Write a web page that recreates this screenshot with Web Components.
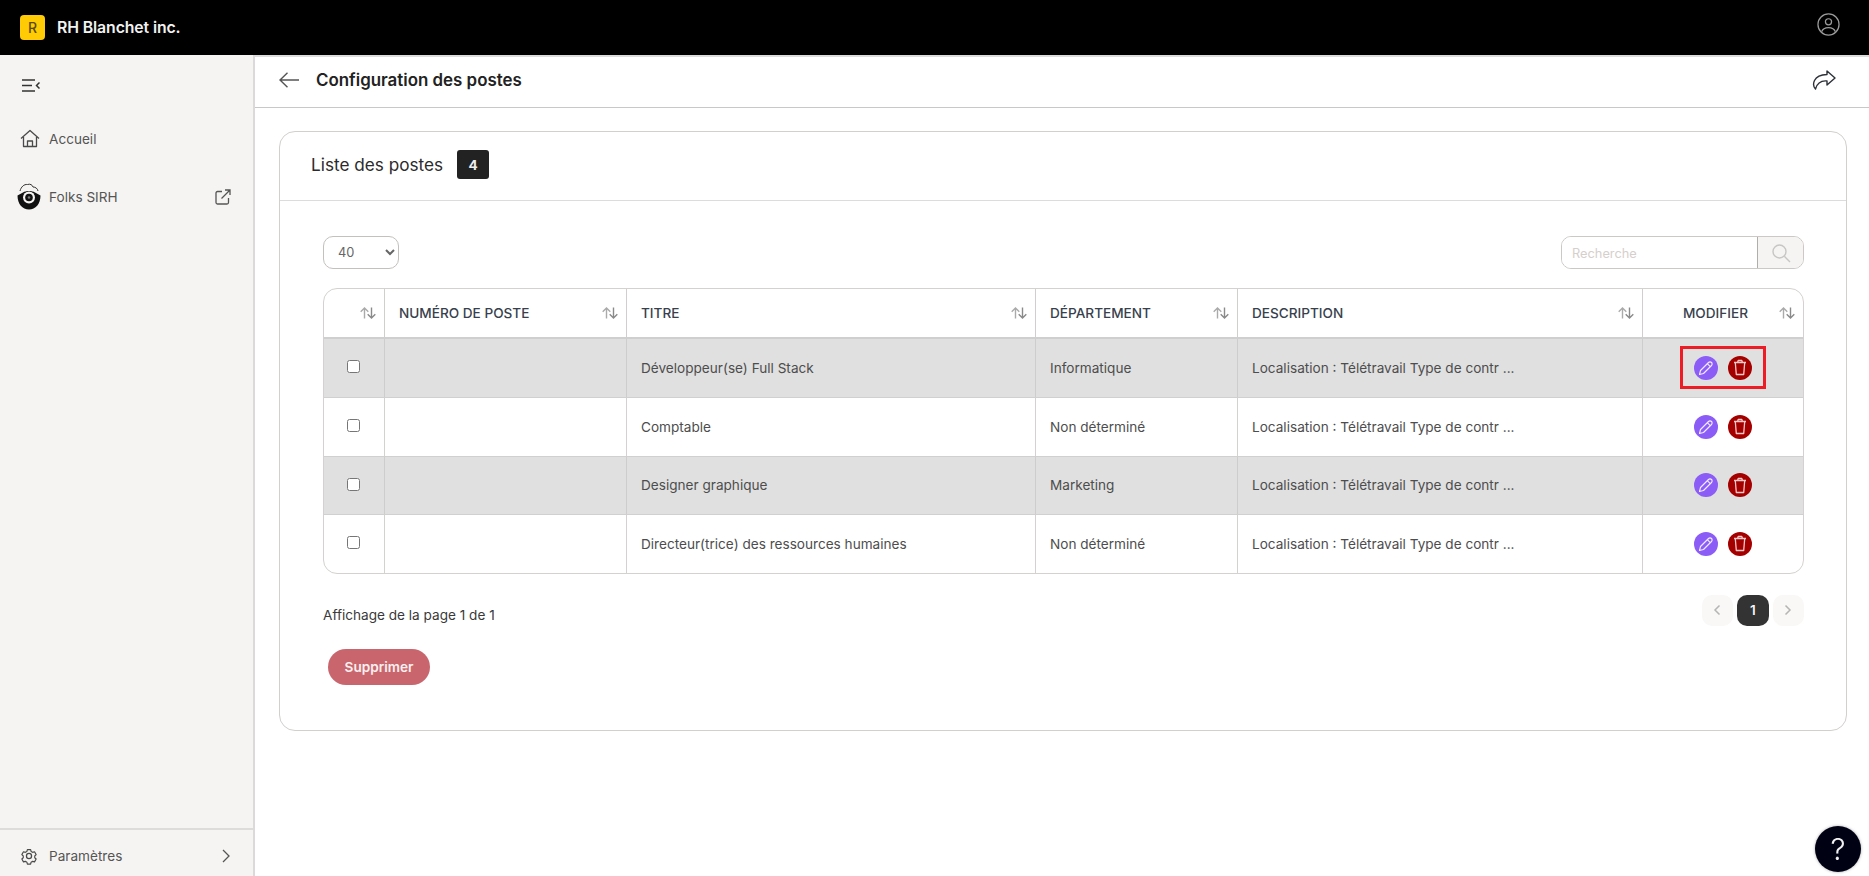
<!DOCTYPE html>
<html lang="fr">
<head>
<meta charset="utf-8">
<title>Configuration des postes</title>
<style>
  html, body { margin: 0; height: 100%; }
  body { font-family: Inter, "Liberation Sans", sans-serif; background: #fff; overflow: hidden; }
  app-shell { height: 876px; }
</style>
</head>
<body>
<app-shell>
  <app-topbar slot="top" company="RH Blanchet inc."></app-topbar>
  <app-sidebar slot="side"></app-sidebar>
  <page-header slot="head" title="Configuration des postes"></page-header>
  <postes-card slot="main"></postes-card>
</app-shell>
<help-button></help-button>

<script>
class AppShell extends HTMLElement {
  constructor() {
    super();
    this.attachShadow({mode: 'open'}).innerHTML = `
      <style>
        :host { display: grid; grid-template-rows: 55px 1fr; grid-template-columns: 255px 1fr; }
        .top { grid-column: 1 / 3; }
        .side { min-height: 0; display: flex; }
        .content { min-width: 0; display: flex; flex-direction: column; }
        .scroll { padding: 23px 22px 0 24px; }
      </style>
      <div class="top"><slot name="top"></slot></div>
      <div class="side"><slot name="side"></slot></div>
      <div class="content">
        <slot name="head"></slot>
        <div class="scroll"><slot name="main"></slot></div>
      </div>`;
  }
}
customElements.define('app-shell', AppShell);

class AppTopbar extends HTMLElement {
  constructor() {
    super();
    this.attachShadow({mode: 'open'}).innerHTML = `
      <style>
        :host { display: flex; align-items: center; height: 55px; background: #000; color: #f2f2f2; padding: 0 29px 0 20px; box-sizing: border-box; }
        .logo { width: 25px; height: 25px; border-radius: 4px; background: #ffcb05; color: #5c4a00; font-size: 14px; font-weight: 500; display: flex; align-items: center; justify-content: center; }
        .name { margin-left: 12px; font-size: 15.8px; font-weight: 600; letter-spacing: -.1px; flex: 1; }
        svg { display: block; margin-top: -7px; }
      </style>
      <div class="logo">R</div>
      <div class="name">${this.getAttribute('company')}</div>
      <svg width="23" height="23" viewBox="0 0 24 24" fill="none" stroke="#9a9a9a" stroke-width="1.3">
        <circle cx="12" cy="12" r="11"/>
        <circle cx="12" cy="9.2" r="3.2"/>
        <path d="M4.8 19.6c1-3 3.6-4.4 7.2-4.4s6.200 1.400 7.200 4.400"/>
      </svg>`;
  }
}
customElements.define('app-topbar', AppTopbar);

const ICONS = {
  home: `<svg width="20" height="20" viewBox="0 0 20 20" fill="none" stroke="#4a4a4a" stroke-width="1.3" stroke-linejoin="round"><path d="M1 9.500 10 1.500l9 8"/><path d="M3.500 8v9.500h13V8"/><path d="M7.500 17.500v-5.500h5v5.500"/></svg>`,
  folks: `<svg style="margin-right:2px" width="24" height="27" viewBox="0 0 24 27"><path d="M3 8C4 4 7 1 10.500 1.500c2.500-1 5 .500 5.500 2.500 2.500 0 4.500 1.500 5 4" fill="none" stroke="#333" stroke-width="1"/><path d="M.5 12.500 6 9.500c3-2 9-2 12 0l5.500 3C23.500 21 18.500 26.500 12 26.500S.5 21 .5 12.500z" fill="#111"/><circle cx="12" cy="14.500" r="6" fill="#f5f4f2"/><circle cx="12" cy="14.500" r="3.800" fill="#111"/><circle cx="12" cy="14.500" r="1.300" fill="#777"/></svg>`,
  external: `<svg width="16" height="16" viewBox="0 0 16 16" fill="none" stroke="#555" stroke-width="1.300"><path d="M7 2.500H2.500a1.500 1.500 0 0 0-1.500 1.500v9.500A1.500 1.500 0 0 0 2.500 15H12a1.500 1.500 0 0 0 1.500-1.500V9"/><path d="M6.500 9.500 15 1M10 1h5v5"/></svg>`,
  gear: `<svg style="margin-right:2px" width="18" height="18" viewBox="0 0 24 24" fill="none" stroke="#4a4a4a" stroke-width="1.700" stroke-linejoin="round"><path d="M9.600 2.500h4.800l.7 2.800 2.300 1.300 2.800-.8 2.400 4.200-2.100 2 0 2.600-.0 0 2.100 1.900-2.400 4.200-2.800-.8-2.300 1.300-.7 2.800H9.600l-.7-2.800-2.300-1.300-2.800.8-2.400-4.200 2.100-1.900v-2.600l-2.100-2 2.400-4.200 2.800.8 2.300-1.300z" transform="translate(1.200 1.200) scale(.9)"/><circle cx="12" cy="12" r="3.400"/></svg>`,
  chevron: `<svg width="10" height="14" viewBox="0 0 10 14" fill="none" stroke="#555" stroke-width="1.300"><path d="M2 1l6 6-6 6"/></svg>`
};

class NavItem extends HTMLElement {
  constructor() {
    super();
    const end = this.getAttribute('end');
    this.attachShadow({mode: 'open'}).innerHTML = `
      <style>
        :host { display: flex; align-items: center; color: #555; font-size: 13.6px; }
        .icon { width: 29px; display: flex; justify-content: center; flex: none; }
        .label { flex: 1; margin-left: 5px; }
        .end { display: flex; }
      </style>
      <span class="icon">${ICONS[this.getAttribute('icon')]}</span>
      <span class="label"><slot></slot></span>
      ${end ? `<span class="end">${ICONS[end]}</span>` : ''}`;
  }
}
customElements.define('nav-item', NavItem);

class AppSidebar extends HTMLElement {
  constructor() {
    super();
    this.attachShadow({mode: 'open'}).innerHTML = `
      <style>
        :host { display: flex; flex-direction: column; flex: 1; background: #f5f4f2; border-right: 2px solid #dcdad8; box-sizing: border-box; height: 821px; }
        .toggle { padding: 24px 0 0 22px; height: 20px; }
        .toggle svg { display: block; }
        nav { flex: 1; padding: 30px 22px 0 15px; }
        nav-item + nav-item { margin-top: 34px; }
        .bottom { border-top: 2px solid #dedcda; padding: 17px 22px 0 15px; height: 48px; box-sizing: border-box; }
      </style>
      <div class="toggle">
        <svg width="18" height="13" viewBox="0 0 18 13" fill="none" stroke="#333" stroke-width="1.500"><path d="M0 1h13M0 6.500h10M0 12h13M17.500 3.500 14.500 6.500l3 3"/></svg>
      </div>
      <nav>
        <nav-item icon="home">Accueil</nav-item>
        <nav-item icon="folks" end="external">Folks SIRH</nav-item>
      </nav>
      <div class="bottom"><nav-item icon="gear" end="chevron">Paramètres</nav-item></div>`;
  }
}
customElements.define('app-sidebar', AppSidebar);

class PageHeader extends HTMLElement {
  constructor() {
    super();
    this.attachShadow({mode: 'open'}).innerHTML = `
      <style>
        :host { display: flex; align-items: center; height: 53px; border-top: 2px solid #dcdcdc; border-bottom: 1px solid #c8c8c8; box-sizing: border-box; padding: 0 33px 4px 24px; background: #fff; }
        h1 { flex: 1; margin: 0 0 0 17px; font-size: 16.9px; font-weight: 600; color: #222; }
        svg { display: block; }
      </style>
      <svg width="20" height="16" viewBox="0 0 20 16" fill="none" stroke="#555" stroke-width="1.400"><path d="M20 8H1M8.500 .7 1 8l7.500 7.300"/></svg>
      <h1>${this.getAttribute('title')}</h1>
      <svg width="24" height="20" viewBox="0 0 24 20" fill="none" stroke="#2c3138" stroke-width="1.400" stroke-linejoin="round"><path d="M15 1l8 7-8 7v-4C10 10.500 5.500 12 3.500 19 0 15 .5 5 15 4.500z"/></svg>`;
  }
}
customElements.define('page-header', PageHeader);

class PostesCard extends HTMLElement {
  constructor() {
    super();
    this.attachShadow({mode: 'open'}).innerHTML = `
      <style>
        :host { display: block; height: 600px; border: 1px solid #d2cfcd; border-radius: 16px; box-sizing: border-box; color: #333; }
        header { height: 69px; border-bottom: 1px solid #dcdcdc; display: flex; align-items: center; padding-left: 31px; padding-bottom: 3px; box-sizing: border-box; }
        h2 { margin: 0; font-size: 17.2px; font-weight: 400; color: #2b2b2b; }
        .count { margin-left: 14px; width: 32px; height: 29px; border-radius: 3px; background: #222; color: #eee; font-size: 13.6px; font-weight: 700; display: flex; align-items: center; justify-content: center; }
        .body { padding: 35px 42px 0 43px; }
        .tools { display: flex; justify-content: space-between; align-items: center; height: 33px; margin-bottom: 19px; }
        select { width: 76px; height: 33px; border: 1px solid #c4c0be; border-radius: 10px; background: #fff; color: #666; font: 12.8px Inter, "Liberation Sans", sans-serif; padding-left: 10px; outline: none; }
        .search { display: flex; width: 243px; height: 33px; border: 1px solid #ccc8c6; border-radius: 10px; box-sizing: border-box; overflow: hidden; }
        .search input { flex: 1; min-width: 0; border: 0; border-right: 1px solid #b0adab; padding: 1px 0 0 10px; font: 12.8px Inter, "Liberation Sans", sans-serif; outline: none; }
        .search input::placeholder { color: #d6cfcc; opacity: 1; }
        .search span { width: 45px; background: #f5f4f2; display: flex; align-items: center; justify-content: center; }
        .foot { display: flex; justify-content: space-between; margin-top: 21px; height: 31px; }
        .foot p { margin: 0; font-size: 13.6px; color: #3a3a3a; padding-top: 12px; }
        .pages { display: flex; gap: 4px; }
        .pages span { width: 31.5px; height: 31px; border-radius: 10px; background: #f9f8f7; display: flex; align-items: center; justify-content: center; }
        .pages .on { background: #333; color: #f4f4f4; font-size: 13.6px; font-weight: 600; }
        button { display: block; margin: 23px 0 0 5px; width: 102px; height: 36px; border: 0; border-radius: 18px; background: #c9656d; color: #fbeff0; font: 600 13.6px Inter, "Liberation Sans", sans-serif; }
      </style>
      <header><h2>Liste des postes</h2><div class="count">4</div></header>
      <div class="body">
        <div class="tools">
          <select><option>40</option></select>
          <div class="search">
            <input placeholder="Recherche">
            <span><svg width="20" height="20" viewBox="0 0 20 20" fill="none" stroke="#c8c6c4" stroke-width="1.400"><circle cx="8.500" cy="8.500" r="6.500"/><path d="M13.300 13.300 19 19"/></svg></span>
          </div>
        </div>
        <postes-table></postes-table>
        <div class="foot">
          <p>Affichage de la page 1 de 1</p>
          <div class="pages">
            <span><svg width="8" height="12" viewBox="0 0 8 12" fill="none" stroke="#b5b5b5" stroke-width="1.500"><path d="M6.500 1.500 2 6l4.500 4.500"/></svg></span>
            <span class="on">1</span>
            <span><svg width="8" height="12" viewBox="0 0 8 12" fill="none" stroke="#b5b5b5" stroke-width="1.500"><path d="M1.500 1.500 6 6l-4.500 4.500"/></svg></span>
          </div>
        </div>
        <button>Supprimer</button>
      </div>`;
  }
}
customElements.define('postes-card', PostesCard);

const COLS = '61px 242px 409px 202px 405px 1fr';
const SORT = `<svg width="16" height="12" viewBox="0 0 16 12" fill="none" stroke="#aaa" stroke-width="1.400"><path d="M4.500 11.500V1M.7 4.800 4.500 1l3.800 3.800"/><path d="M11.500 .5V11M7.700 7.200l3.800 3.800 3.800-3.800" stroke="#8a8a8a"/></svg>`;

class PostesTable extends HTMLElement {
  constructor() {
    super();
    const heads = ['', 'NUMÉRO DE POSTE', 'TITRE', 'DÉPARTEMENT', 'DESCRIPTION', 'MODIFIER'];
    this.attachShadow({mode: 'open'}).innerHTML = `
      <style>
        :host { display: block; border: 1px solid #d4d2d0; border-radius: 14px; overflow: hidden; }
        .head { display: grid; grid-template-columns: ${COLS}; height: 48px; border-bottom: 2px solid #cfcfcf; margin-left: -1px; }
        .head div { display: flex; align-items: center; padding: 0 8px 0 14px; border-left: 1px solid #d0cfcd; font-size: 13.6px; font-weight: 500; color: #37414d; min-width: 0; white-space: nowrap; }
        .head div:first-child { border-left: 1px solid transparent; }
        .head span { flex: 1; }
        .head .center span { text-align: center; padding-right: 5px; }
        .head svg { flex: none; }
      </style>
      <div class="head">
        ${heads.map((h, i) => `<div class="${i === 5 ? 'center' : ''}"><span>${h}</span>${SORT}</div>`).join('')}
      </div>
      <poste-row titre="Développeur(se) Full Stack" dept="Informatique" shaded marked></poste-row>
      <poste-row titre="Comptable" dept="Non déterminé"></poste-row>
      <poste-row titre="Designer graphique" dept="Marketing" shaded></poste-row>
      <poste-row titre="Directeur(trice) des ressources humaines" dept="Non déterminé" last></poste-row>`;
  }
}
customElements.define('postes-table', PostesTable);

class PosteRow extends HTMLElement {
  constructor() {
    super();
    const marked = this.hasAttribute('marked');
    this.attachShadow({mode: 'open'}).innerHTML = `
      <style>
        :host { display: grid; grid-template-columns: ${COLS}; height: 58.8px; margin-left: -1px; border-bottom: 1px solid #d0d0d0; box-sizing: border-box; font-size: 13.6px; color: #4d4d4d; }
        :host([shaded]) { background: #e0e0e0; }
        :host([last]) { height: 57.2px; border-bottom: 0; }
        div { display: flex; align-items: center; padding: 0 14px; border-left: 1px solid #d4d2d0; min-width: 0; white-space: nowrap; }
        :host([shaded]) div { border-left-color: #cdcdcd; }
        div.check { border-left-color: transparent !important; padding: 0 0 0 23px; }
        input { width: 13px; height: 13px; margin: 0 0 2px 0; }
        .desc { overflow: hidden; }
        .actions { position: relative; justify-content: center; gap: 10px; padding: 0; }
        .round { width: 24px; height: 24px; border-radius: 50%; display: flex; align-items: center; justify-content: center; }
        .edit { background: #8b5cf6; }
        .del { background: #a40000; }
        .mark { position: absolute; left: 37px; top: 7px; width: 86px; height: 43px; border: 3.5px solid #ee1c25; box-sizing: border-box; }
      </style>
      <div class="check"><input type="checkbox"></div>
      <div></div>
      <div>${this.getAttribute('titre')}</div>
      <div>${this.getAttribute('dept')}</div>
      <div class="desc">Localisation : Télétravail Type de contr ...</div>
      <div class="actions">
        <span class="round edit"><svg width="16" height="16" viewBox="0 0 16 16" fill="none" stroke="#f3edff" stroke-width="1.100" stroke-linejoin="round"><path d="M1.500 14.500 2.500 10.500 10.500 2.500a1.800 1.800 0 0 1 3 3L5.500 13.500z"/><path d="M9.300 3.700l3 3"/></svg></span>
        <span class="round del"><svg width="16" height="17" viewBox="0 0 16 17" fill="none" stroke="#f5c9c9" stroke-width="1.300" stroke-linejoin="round"><path d="M2 3.500h12M5.500 3.500l.7-2h3.600l.7 2"/><path d="M3.300 3.500l1 12h7.400l1-12"/></svg></span>
        ${marked ? '<span class="mark"></span>' : ''}
      </div>`;
  }
}
customElements.define('poste-row', PosteRow);

class HelpButton extends HTMLElement {
  constructor() {
    super();
    this.attachShadow({mode: 'open'}).innerHTML = `
      <style>
        :host { position: fixed; right: 8px; bottom: 4px; width: 46px; height: 46px; border-radius: 50%; background: #000214; color: #f2f2f2; display: flex; align-items: center; justify-content: center; font-size: 30px; font-weight: 300; box-shadow: 0 0 3px rgba(0,0,0,.35); }
      </style>
      ?`;
  }
}
customElements.define('help-button', HelpButton);
</script>
</body>
</html>
